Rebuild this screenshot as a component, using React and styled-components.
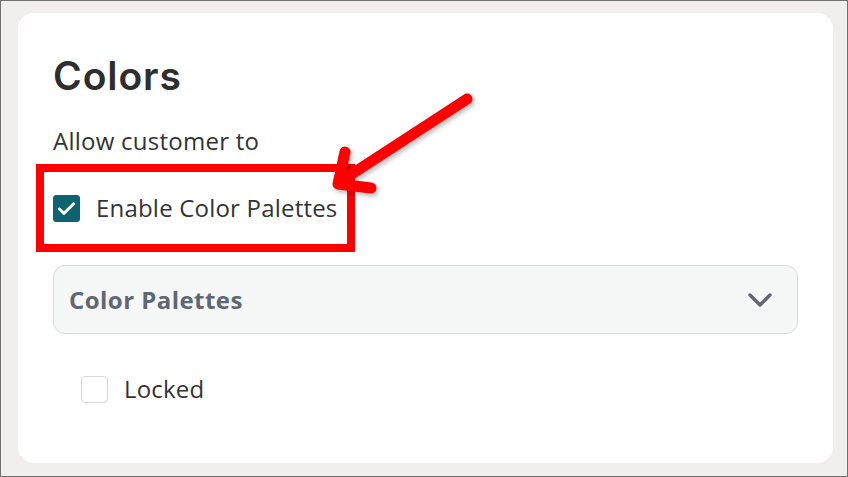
import React from "react";
import styled, { createGlobalStyle } from "styled-components";

const Global = createGlobalStyle`
  html, body { margin: 0; padding: 0; }
  body { background: #f2eeed; font-family: "Open Sans", "Noto Sans", sans-serif; }
  #root { width: 848px; height: 477px; }
`;

const Frame = styled.div`
  box-sizing: border-box;
  width: 848px;
  height: 477px;
  border: 1px solid #707070;
  background: #f2eeed;
  padding: 12px 15px 13px 17px;
  position: relative;
  overflow: hidden;
`;

const Card = styled.section`
  box-sizing: border-box;
  width: 815px;
  height: 450px;
  background: #ffffff;
  border-radius: 16px;
  padding: 42px 35px 0 35px;
  display: flex;
  flex-direction: column;
`;

const Title = styled.h2`
  margin: 0;
  font-family: "Inter", sans-serif;
  font-weight: 600;
  font-size: 39px;
  line-height: 41px;
  letter-spacing: 0.9px;
  color: #2e2e2e;
`;

const Subtitle = styled.p`
  margin: 30px 0 0 0;
  font-size: 24px;
  line-height: 30px;
  letter-spacing: 0.25px;
  color: #333333;
`;

const Highlight = styled.div`
  margin: 8px 0 0 -17px;
  width: 319px;
  height: 88px;
  box-sizing: border-box;
  border: 8px solid #ff0000;
  display: flex;
  align-items: center;
  padding-left: 9px;
`;

const Row = styled.label`
  display: flex;
  align-items: center;
  gap: 16px;
  font-size: 24px;
  line-height: 30px;
  letter-spacing: 0.2px;
  color: #333333;
  margin-left: ${(p) => p.indent || 0}px;
`;

const Box = styled.span`
  box-sizing: border-box;
  width: 27px;
  height: 27px;
  flex: none;
  border-radius: ${(p) => (p.checked ? 3 : 4)}px;
  background: ${(p) => (p.checked ? "#0d6470" : "#ffffff")};
  border: 1px solid ${(p) => (p.checked ? "#0d6470" : "#d6d6d6")};
  display: flex;
  align-items: center;
  justify-content: center;
`;

const Select = styled.div`
  box-sizing: border-box;
  margin-top: 13px;
  height: 69px;
  border: 1px solid #d9dcdc;
  border-radius: 12px;
  background: #f6f7f7;
  display: flex;
  align-items: center;
  justify-content: space-between;
  padding: 0 25px 0 15px;
`;

const SelectLabel = styled.span`
  font-size: 24px;
  font-weight: 700;
  color: #5f6773;
  letter-spacing: 0.45px;
  line-height: 30px;
`;

const LockedRow = styled(Row)`
  margin-top: 40px;
`;

const Arrow = styled.svg`
  position: absolute;
  left: 0;
  top: 0;
  filter: drop-shadow(2px 3px 2px rgba(0, 0, 0, 0.25));
  pointer-events: none;
`;

const Check = () => (
  <svg width="23" height="23" viewBox="0 0 24 24" fill="none">
    <path d="M4.5 12.5l4.8 4.6L19.5 7" stroke="#fff" strokeWidth="3" strokeLinecap="round" strokeLinejoin="round" />
  </svg>
);

const Chevron = () => (
  <svg width="24" height="16" viewBox="0 0 24 16" fill="none">
    <path d="M2 3l10 10L22 3" stroke="#5f6773" strokeWidth="3.4" strokeLinecap="round" strokeLinejoin="round" />
  </svg>
);

export default function App() {
  return (
    <>
      <Global />
      <Frame>
        <Card>
          <Title>Colors</Title>
          <Subtitle>Allow customer to</Subtitle>
          <Highlight>
            <Row>
              <Box checked>
                <Check />
              </Box>
              Enable Color Palettes
            </Row>
          </Highlight>
          <Select>
            <SelectLabel>Color Palettes</SelectLabel>
            <Chevron />
          </Select>
          <LockedRow indent={28}>
            <Box />
            Locked
          </LockedRow>
        </Card>
        <Arrow width="848" height="477" viewBox="0 0 848 477">
          <g stroke="#ff0000" strokeWidth="11" strokeLinecap="round" strokeLinejoin="round" fill="none">
            <line x1="466" y1="98" x2="340" y2="180" />
            <polyline points="344,151 337,183 370,187" />
          </g>
        </Arrow>
      </Frame>
    </>
  );
}
